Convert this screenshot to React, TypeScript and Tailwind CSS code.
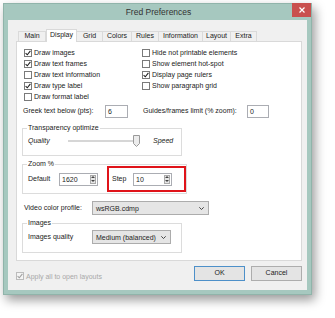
import React from "react";

const TABS = [
  { label: "Main", w: "w-[28px]" },
  { label: "Display", w: "w-[31px]", active: true },
  { label: "Grid", w: "w-[27px]" },
  { label: "Colors", w: "w-[30px]" },
  { label: "Rules", w: "w-[28px]" },
  { label: "Information", w: "w-[45px]" },
  { label: "Layout", w: "w-[29px]" },
  { label: "Extra", w: "w-[27px]" },
];

const LEFT_OPTS = [
  { label: "Draw images", on: true },
  { label: "Draw text frames", on: true },
  { label: "Draw text information", on: false },
  { label: "Draw type label", on: true },
  { label: "Draw format label", on: false },
];

const RIGHT_OPTS = [
  { label: "Hide not printable elements", on: false },
  { label: "Show element hot-spot", on: false },
  { label: "Display page rulers", on: true },
  { label: "Show paragraph grid", on: false },
];

function Check({ on, disabled }: { on: boolean; disabled?: boolean }) {
  return (
    <span
      className={`w-[8px] h-[8px] shrink-0 border flex items-center justify-center ${
        disabled ? "border-[#bcbcbc] bg-[#f4f4f4]" : "border-[#7a7a7a] bg-white"
      }`}
    >
      {on && (
        <svg width="6" height="6" viewBox="0 0 6 6">
          <path d="M0.6 3.1 L2.3 4.8 L5.4 0.9" fill="none" stroke={disabled ? "#a0a0a0" : "#222"} strokeWidth="1.1" />
        </svg>
      )}
    </span>
  );
}

function CheckRow({ label, on }: { label: string; on: boolean }) {
  return (
    <div className="flex items-center h-[11px] gap-[2px]">
      <Check on={on} />
      <span className="leading-none">{label}</span>
    </div>
  );
}

function TextBox({ value, w, spin }: { value: string; w: string; spin?: boolean }) {
  return (
    <div className={`${w} h-[13px] border border-[#abadb3] bg-white flex items-center justify-between pl-[2px] pr-[1px]`}>
      <span className="leading-none">{value}</span>
      {spin && (
        <span className="w-[6px] h-[9px] border border-[#a9a9a9] bg-[#e6e6e6] flex flex-col items-center justify-around">
          <svg width="4" height="2" viewBox="0 0 4 2"><path d="M0 2 L2 0 L4 2Z" fill="#444" /></svg>
          <svg width="4" height="2" viewBox="0 0 4 2"><path d="M0 0 L2 2 L4 0Z" fill="#444" /></svg>
        </span>
      )}
    </div>
  );
}

function Select({ value, w }: { value: string; w: string }) {
  return (
    <div className={`${w} h-[14px] border border-[#acacac] bg-[#e5e5e5] flex items-center justify-between pl-[3px] pr-[4px]`}>
      <span className="leading-none text-[#1e1e1e]">{value}</span>
      <svg width="5" height="3" viewBox="0 0 5 3">
        <path d="M0.3 0.3 L2.5 2.5 L4.7 0.3" fill="none" stroke="#333" strokeWidth="0.9" />
      </svg>
    </div>
  );
}

function Group({ title, className, children }: { title: string; className?: string; children: React.ReactNode }) {
  return (
    <fieldset className={`w-[160px] border border-[#dcdcdc] ${className ?? ""}`}>
      <legend className="ml-[4px] px-[1px] h-[10px] leading-[10px]">{title}</legend>
      {children}
    </fieldset>
  );
}

export default function App() {
  return (
    <div className="w-[335px] h-[318px] bg-white overflow-hidden pt-[3px] pl-[3px] font-['Liberation_Sans',Arial,sans-serif] text-[7px] text-[#222]">
      <div className="w-[309px] h-[292px] bg-[#a6c8bf] border border-[#90b4aa] flex flex-col shadow-[3px_5px_10px_rgba(0,0,0,0.4)]">
        {/* Title bar */}
        <div className="h-[16px] grid grid-cols-[1fr_auto_1fr] shrink-0">
          <div />
          <div className="text-[8.5px] leading-[17px] text-[#333] pl-[2px]">Fred Preferences</div>
          <div className="flex justify-end items-start -mt-px">
            <div className="w-[19px] h-[14px] bg-[#c9504e] flex items-center justify-center">
              <svg width="6" height="6" viewBox="0 0 6 6">
                <path d="M0.5 0.5 L5.5 5.5 M5.5 0.5 L0.5 5.5" stroke="#fff" strokeWidth="1.2" />
              </svg>
            </div>
          </div>
        </div>

        {/* Body */}
        <div className="flex-1 mx-[4px] mb-[4px] bg-[#f0f0f0] pt-[9px] pl-[8px] flex flex-col">
          {/* Tabs */}
          <div className="flex items-end h-[12px] pl-[2px] relative z-10">
            {TABS.map((t) =>
              t.active ? (
                <div
                  key={t.label}
                  className={`${t.w} h-[13px] -mb-px bg-white border border-b-0 border-[#d9d9d9] flex items-center justify-center pb-[1px]`}
                >
                  {t.label}
                </div>
              ) : (
                <div
                  key={t.label}
                  className={`${t.w} h-[10px] bg-[#f0f0f0] border border-b-0 border-[#dadada] -ml-px first:ml-0 flex items-center justify-center`}
                >
                  {t.label}
                </div>
              )
            )}
          </div>

          {/* Panel */}
          <div className="w-[286px] h-[220px] bg-white border border-[#d9d9d9] pt-[5px] pl-[5px] flex flex-col">
            <div className="flex pl-[2px]">
              <div className="w-[118px] flex flex-col">
                {LEFT_OPTS.map((o) => (
                  <CheckRow key={o.label} label={o.label} on={o.on} />
                ))}
              </div>
              <div className="flex flex-col">
                {RIGHT_OPTS.map((o) => (
                  <CheckRow key={o.label} label={o.label} on={o.on} />
                ))}
              </div>
            </div>

            <div className="flex items-center h-[14px] mt-[2px] pl-[1px]">
              <span className="w-[82px]">Greek text below (pts):</span>
              <TextBox value="6" w="w-[23px]" />
              <span className="w-[104px] ml-[15px]">Guides/frames limit (% zoom):</span>
              <TextBox value="0" w="w-[22px]" />
            </div>

            <Group title="Transparency optimize" className="mt-[5px] pb-[8px]">
              <div className="flex items-center h-[12px] mt-[2px] pl-[5px] italic">
                <span className="w-[40px]">Quality</span>
                <div className="relative w-[72px] h-[12px] flex items-center">
                  <div className="w-full h-[2px] bg-[#e2e2e2] border-y border-[#d6d6d6]" />
                  <svg className="absolute left-[65px] top-0" width="7" height="12" viewBox="0 0 7 12">
                    <path d="M0.5 0.5 H6.5 V8.5 L3.5 11.5 L0.5 8.5 Z" fill="#ececec" stroke="#9a9a9a" />
                  </svg>
                </div>
                <span className="ml-[13px]">Speed</span>
              </div>
            </Group>

            <Group title="Zoom %" className="mt-[3px] pb-px">
              <div className="flex items-center h-[26px] -mt-[3px] pl-[5px]">
                <span className="w-[31px]">Default</span>
                <TextBox value="1620" w="w-[39px]" spin />
                <div className="ml-[9px] w-[79px] h-[26px] border-2 border-[#e0141a] flex items-center pl-[3px] shrink-0">
                  <span className="w-[21px]">Step</span>
                  <TextBox value="10" w="w-[39px]" spin />
                </div>
              </div>
            </Group>

            <div className="flex items-center h-[14px] mt-[7px] pl-[2px]">
              <span className="w-[68px]">Video color profile:</span>
              <Select value="wsRGB.cdmp" w="w-[117px]" />
            </div>

            <Group title="Images" className="mt-[3px] pb-[8px]">
              <div className="flex items-center h-[14px] mt-[2px] pl-[5px]">
                <span className="w-[64px]">Images quality</span>
                <Select value="Medium (balanced)" w="w-[79px]" />
              </div>
            </Group>
          </div>

          {/* Footer */}
          <div className="flex items-start w-[286px] mt-[4px]">
            <div className="flex items-center gap-[2px] mt-[7px] text-[#a8a8a8]">
              <Check on disabled />
              <span className="leading-none">Apply all to open layouts</span>
            </div>
            <div className="ml-auto flex gap-[6px] mt-px">
              <div className="w-[51px] h-[15px] bg-[#e4e4e4] border border-[#4d90c9] flex items-center justify-center">OK</div>
              <div className="w-[51px] h-[15px] bg-[#e4e4e4] border border-[#adadad] flex items-center justify-center">Cancel</div>
            </div>
          </div>
        </div>
      </div>
    </div>
  );
}
